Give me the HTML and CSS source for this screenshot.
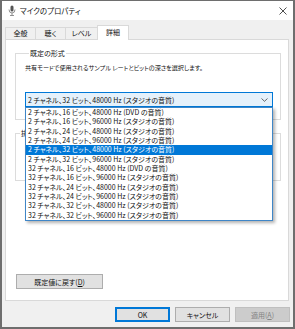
FILE: index.html
```html
<!DOCTYPE html>
<html lang="ja">
	<head>
		<meta charset="UTF-8" />
		<meta name="viewport" content="width=device-width, initial-scale=1.0" />
		<title>マイクのプロパティ</title>
		<link rel="stylesheet" href="styles.css">
	</head>
	<body>
		<div class="window">
			<div class="titlebar">
				<svg class="app-icon" width="8" height="11" viewBox="0 0 8 11">
					<rect x="2.5" y="0.5" width="3" height="6" rx="1.5" fill="#555" />
					<path d="M1 4.5 Q1 8 4 8 Q7 8 7 4.5" fill="none" stroke="#777" stroke-width="0.8" />
					<path d="M4 8 V10.5 M2 10.5 H6" stroke="#777" stroke-width="0.8" />
				</svg>
				<span class="title">マイクのプロパティ</span>
				<svg class="close" width="8" height="8" viewBox="0 0 8 8">
					<path d="M0.5 0.5 L7.5 7.5 M7.5 0.5 L0.5 7.5" stroke="#222" stroke-width="0.8" />
				</svg>
			</div>

			<div class="content">
				<div class="tabs">
					<div class="tab" style="width: 31px">全般</div>
					<div class="tab" style="width: 31px">聴く</div>
					<div class="tab" style="width: 33px">レベル</div>
					<div class="tab active" style="width: 32px">詳細</div>
				</div>

				<div class="panel">
					<div class="group first">
						<div class="legend">既定の形式</div>
						<p class="hint">共有モードで使用されるサンプル レートとビットの深さを選択します。</p>

						<div class="combo">
							<span>2 チャネル、32 ビット、48000 Hz (スタジオの音質)</span>
							<svg width="7" height="4" viewBox="0 0 7 4">
								<path d="M0.5 0.5 L3.5 3.3 L6.5 0.5" fill="none" stroke="#444" stroke-width="0.8" />
							</svg>

							<ul class="dropdown">
								<li>2 チャネル、16 ビット、48000 Hz (DVD の音質)</li>
								<li>2 チャネル、16 ビット、96000 Hz (スタジオの音質)</li>
								<li>2 チャネル、24 ビット、48000 Hz (スタジオの音質)</li>
								<li>2 チャネル、24 ビット、96000 Hz (スタジオの音質)</li>
								<li class="selected">2 チャネル、32 ビット、48000 Hz (スタジオの音質)</li>
								<li>2 チャネル、32 ビット、96000 Hz (スタジオの音質)</li>
								<li>32 チャネル、16 ビット、48000 Hz (DVD の音質)</li>
								<li>32 チャネル、16 ビット、96000 Hz (スタジオの音質)</li>
								<li>32 チャネル、24 ビット、48000 Hz (スタジオの音質)</li>
								<li>32 チャネル、24 ビット、96000 Hz (スタジオの音質)</li>
								<li>32 チャネル、32 ビット、48000 Hz (スタジオの音質)</li>
								<li>32 チャネル、32 ビット、96000 Hz (スタジオの音質)</li>
							</ul>
						</div>
					</div>

					<div class="group second">
						<div class="legend">排他モード</div>
					</div>

					<div class="panel-bottom">
						<button class="btn reset">既定値に戻す(<u>D</u>)</button>
					</div>
				</div>

				<div class="footer">
					<button class="btn default">OK</button>
					<button class="btn">キャンセル</button>
					<button class="btn" disabled>適用(<u>A</u>)</button>
				</div>
			</div>
		</div>
	</body>
</html>
```

FILE: styles.css
```css
* {
	box-sizing: border-box;
}
body {
	margin: 0;
	font-family: "Noto Sans CJK JP", "Noto Sans", sans-serif;
	font-size: 7px;
	font-feature-settings: "palt";
	color: #111;
}
.window {
	width: 295px;
	height: 329px;
	border: 2px solid #6e6e6e;
	border-top-width: 1px;
	background-color: #f0f0f0;
}
.titlebar {
	height: 19px;
	background-color: #fff;
	display: flex;
	align-items: center;
	padding-left: 6px;
	padding-right: 6px;
}
.titlebar .title {
	margin-left: 4px;
	font-size: 7.5px;
	flex: 1;
}
.content {
	padding: 5px 3px 0 3px;
}
.tabs {
	height: 14px;
	display: flex;
	align-items: flex-end;
}
.tab {
	height: 12px;
	border: 1px solid #d9d9d9;
	border-bottom: none;
	margin-right: -1px;
	text-align: center;
	line-height: 10px;
	background-color: #f0f0f0;
}
.tab.active {
	height: 15px;
	margin-bottom: -1px;
	background-color: #fff;
	position: relative;
	z-index: 1;
	line-height: 12px;
}
.panel {
	height: 262px;
	margin-right: 1px;
	border: 1px solid #d9d9d9;
	background-color: #fff;
	padding: 0 7px 0 9px;
}
.group {
	border: 1px solid #dcdcdc;
}
.group.first {
	margin-top: 13px;
	height: 67px;
	padding: 0 7px 0 9px;
	position: relative;
	z-index: 2;
}
.group.second {
	margin-top: 13px;
	height: 48px;
}
.legend {
	display: table;
	margin: -5px 0 0 4px;
	padding: 0 1px;
	line-height: 9px;
	background-color: #fff;
}
.hint {
	margin: 5px 0 0 0;
	font-size: 6.1px;
	line-height: 9px;
	white-space: nowrap;
}
.combo {
	margin-top: 20px;
	height: 15px;
	border: 1px solid #0078d7;
	background-color: #e5f1fb;
	display: flex;
	align-items: center;
	justify-content: space-between;
	padding: 0 4px 0 2px;
	position: relative;
}
.dropdown {
	position: absolute;
	left: -1px;
	right: -1px;
	top: 14px;
	margin: 0;
	padding: 0;
	list-style: none;
	background-color: #fff;
	border: 1px solid #3f86c7;
	box-shadow: 2px 2px 3px rgba(0, 0, 0, 0.3);
}
.dropdown li {
	height: 9.35px;
	line-height: 9.35px;
	padding-left: 2px;
	white-space: nowrap;
}
.dropdown li.selected {
	background-color: #0078d7;
	color: #fff;
}
.panel-bottom {
	margin-top: 93px;
	padding-left: 1px;
}
.btn {
	display: block;
	height: 15px;
	padding: 0;
	border: 1px solid #adadad;
	background-color: #e1e1e1;
	font-family: inherit;
	font-size: 7px;
	font-feature-settings: "palt";
	color: #111;
	line-height: 12px;
}
.reset {
	width: 87px;
}
.footer {
	margin-top: 6px;
	display: flex;
	justify-content: flex-end;
	gap: 5px;
}
.footer .btn {
	width: 55px;
}
.btn.default {
	border-color: #0078d7;
	box-shadow: inset 0 0 0 1px #0078d7;
}
.btn:disabled {
	background-color: #cccccc;
	border-color: #bfbfbf;
	color: #838383;
}
```
